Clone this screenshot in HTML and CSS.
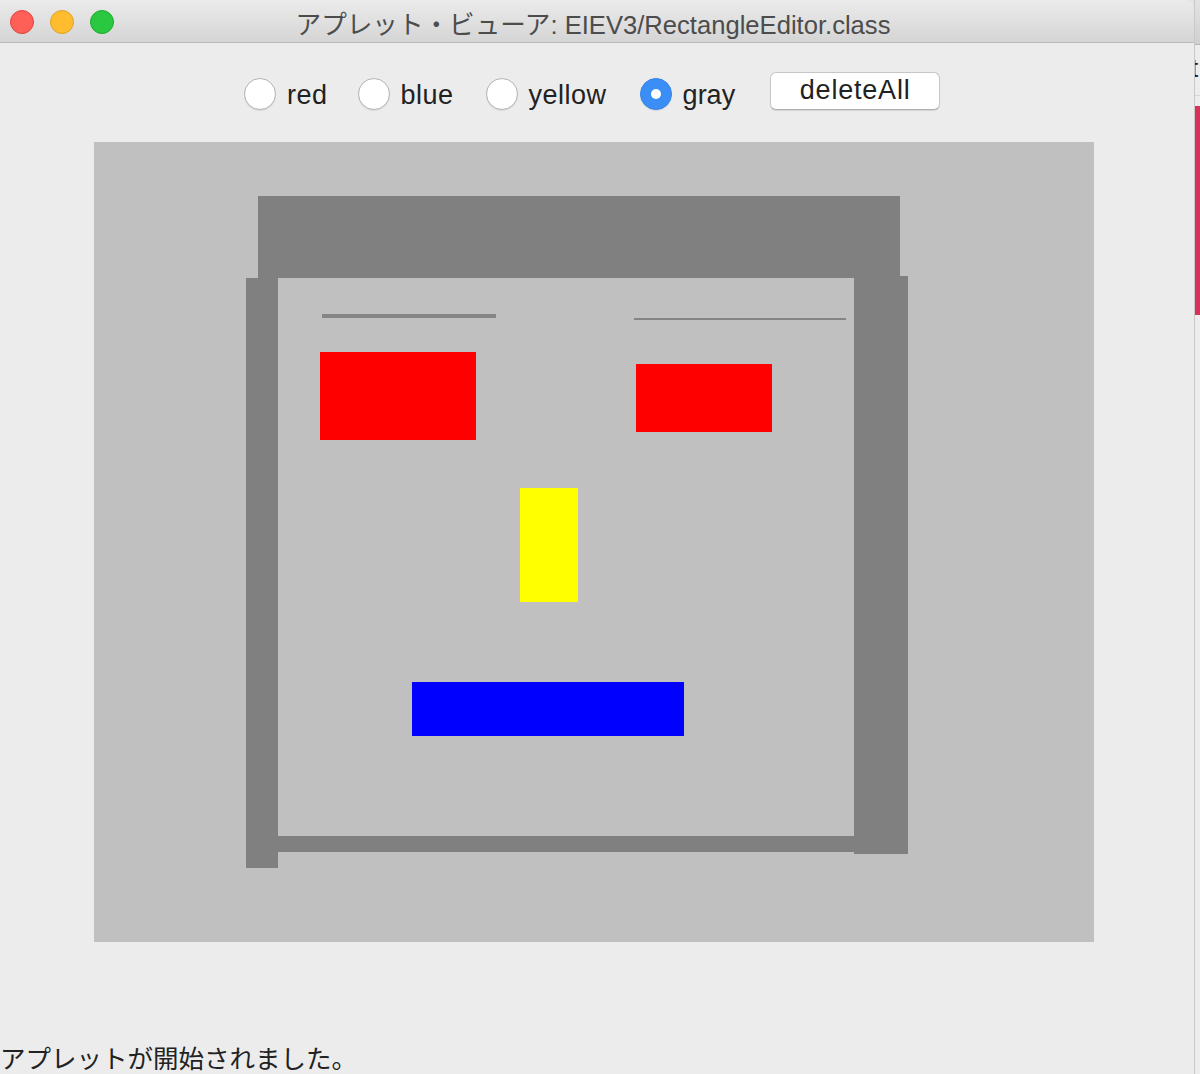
FILE: index.html
```html
<!DOCTYPE html>
<html lang="ja">
<head>
<meta charset="utf-8">
<title>アプレット・ビューア</title>
<link rel="stylesheet" href="styles.css">
</head>
<body>
<div class="desktop">
  <div class="window">
    <div class="titlebar">
      <div class="lights">
        <span class="light light-red"></span>
        <span class="light light-yellow"></span>
        <span class="light light-green"></span>
      </div>
      <div class="title">アプレット・ビューア: EIEV3/RectangleEditor.class</div>
    </div>
    <div class="toolbar">
      <label class="radio-item item-red"><span class="radio"></span><span class="label">red</span></label>
      <label class="radio-item item-blue"><span class="radio"></span><span class="label">blue</span></label>
      <label class="radio-item item-yellow"><span class="radio"></span><span class="label">yellow</span></label>
      <label class="radio-item item-gray"><span class="radio radio-on"></span><span class="label">gray</span></label>
      <button class="btn">deleteAll</button>
    </div>
    <div class="canvas">
      <div class="shape gray top-bar"></div>
      <div class="shape gray left-bar"></div>
      <div class="shape gray right-bar"></div>
      <div class="shape gray bottom-bar"></div>
      <div class="shape line line-1"></div>
      <div class="shape line line-2"></div>
      <div class="shape red eye-1"></div>
      <div class="shape red eye-2"></div>
      <div class="shape yellow nose"></div>
      <div class="shape blue mouth"></div>
    </div>
    <div class="status">アプレットが開始されました。</div>
  </div>
  <div class="behind">
    <div class="behind-top"></div>
    <div class="behind-text">t</div>
    <div class="behind-strip"></div>
  </div>
</div>
</body>
</html>
```
FILE: styles.css
```css
html, body {
  margin: 0;
  padding: 0;
  width: 1200px;
  height: 1074px;
  overflow: hidden;
  background: #e4e4e4;
}

.desktop {
  display: flex;
  width: 1200px;
  height: 1074px;
}

.window {
  width: 1194px;
  height: 1074px;
  flex: none;
  display: flex;
  flex-direction: column;
  background: #ececec;
  border-top-right-radius: 10px;
  overflow: hidden;
  font-family: "Liberation Sans", "Noto Sans CJK JP", sans-serif;
}

.titlebar {
  height: 42px;
  flex: none;
  display: flex;
  align-items: center;
  position: relative;
  background: linear-gradient(#ebebeb, #d5d5d5);
  border-bottom: 1px solid #b9b9b9;
}

.lights {
  display: flex;
  gap: 16px;
  padding-left: 10px;
  position: absolute;
  left: 0;
  top: 10px;
}

.light {
  width: 22px;
  height: 22px;
  border-radius: 50%;
  border: 1px solid;
}

.light-red { background: #fe5f57; border-color: #e1453f; }
.light-yellow { background: #febc2e; border-color: #dea224; }
.light-green { background: #29c840; border-color: #1cab2a; }

.title {
  flex: 1;
  text-align: center;
  font-size: 25.6px;
  color: #4c4c4c;
  font-family: "Liberation Sans", "Noto Sans CJK JP", sans-serif;
  padding-top: 2px;
  padding-right: 8px;
}

.toolbar {
  height: 97px;
  flex: none;
  display: flex;
  align-items: center;
  padding-top: 2px;
  padding-left: 244px;
}

.radio-item {
  display: flex;
  align-items: center;
  gap: 11px;
}

.item-red { margin-right: 30px; }
.item-blue { margin-right: 32px; }
.item-yellow { margin-right: 33px; }
.item-gray { margin-right: 34px; }

.radio {
  width: 30px;
  height: 30px;
  border-radius: 50%;
  border: 1px solid #b4b4b4;
  background: #ffffff;
  box-shadow: 0 1px 1px rgba(0, 0, 0, 0.08);
  position: relative;
}

.radio-on {
  background: #3b8ef6;
  border-color: #3583ea;
}

.radio-on::after {
  content: "";
  position: absolute;
  left: 10px;
  top: 10px;
  width: 10px;
  height: 10px;
  border-radius: 50%;
  background: #ffffff;
}

.label {
  font-size: 27px;
  letter-spacing: 0.5px;
  color: #222222;
  padding-top: 3px;
}

.item-gray .label { letter-spacing: 0; }

.btn {
  width: 170px;
  height: 38px;
  margin-left: 1px;
  margin-bottom: 6px;
  background: #ffffff;
  border: 1px solid #c6c6c6;
  border-bottom-color: #b0b0b0;
  border-radius: 6px;
  box-shadow: 0 1px 1px rgba(0, 0, 0, 0.1);
  font-family: "Liberation Sans", sans-serif;
  font-size: 27px;
  letter-spacing: 0.8px;
  color: #222222;
  padding: 0;
}

.canvas {
  position: relative;
  margin-left: 94px;
  width: 1000px;
  height: 800px;
  flex: none;
  background: #c0c0c0;
}

.shape { position: absolute; }
.gray { background: #808080; }
.red { background: #ff0000; }
.yellow { background: #ffff00; }
.blue { background: #0000ff; }
.line { background: #858585; }

.top-bar { left: 164px; top: 54px; width: 642px; height: 82px; }
.left-bar { left: 152px; top: 136px; width: 32px; height: 590px; }
.right-bar { left: 760px; top: 134px; width: 54px; height: 578px; }
.bottom-bar { left: 184px; top: 694px; width: 576px; height: 16px; }
.line-1 { left: 228px; top: 172px; width: 174px; height: 4px; }
.line-2 { left: 540px; top: 176px; width: 212px; height: 2px; }
.eye-1 { left: 226px; top: 210px; width: 156px; height: 88px; }
.eye-2 { left: 542px; top: 222px; width: 136px; height: 68px; }
.nose { left: 426px; top: 346px; width: 58px; height: 114px; }
.mouth { left: 318px; top: 540px; width: 272px; height: 54px; }

.status {
  margin-top: auto;
  height: 36px;
  line-height: 38px;
  font-family: "Noto Sans CJK JP", sans-serif;
  font-size: 25.5px;
  color: #222222;
  white-space: nowrap;
}

.behind {
  width: 6px;
  flex: none;
  display: flex;
  flex-direction: column;
  background: #ededed;
  border-left: 1px solid #c8c8c8;
  box-sizing: border-box;
  overflow: hidden;
}

.behind-top {
  height: 44px;
  background: linear-gradient(#e3e3e3, #d0d0d0);
  border-bottom: 1px solid #b4b4b4;
}

.behind-text {
  height: 50px;
  font-family: "Liberation Sans", sans-serif;
  font-size: 26px;
  line-height: 46px;
  color: #222222;
  margin-left: -4px;
  border-bottom: 1px solid #d6d6d6;
}

.behind-strip {
  margin-top: 10px;
  height: 209px;
  background: #d6325a;
}
```
